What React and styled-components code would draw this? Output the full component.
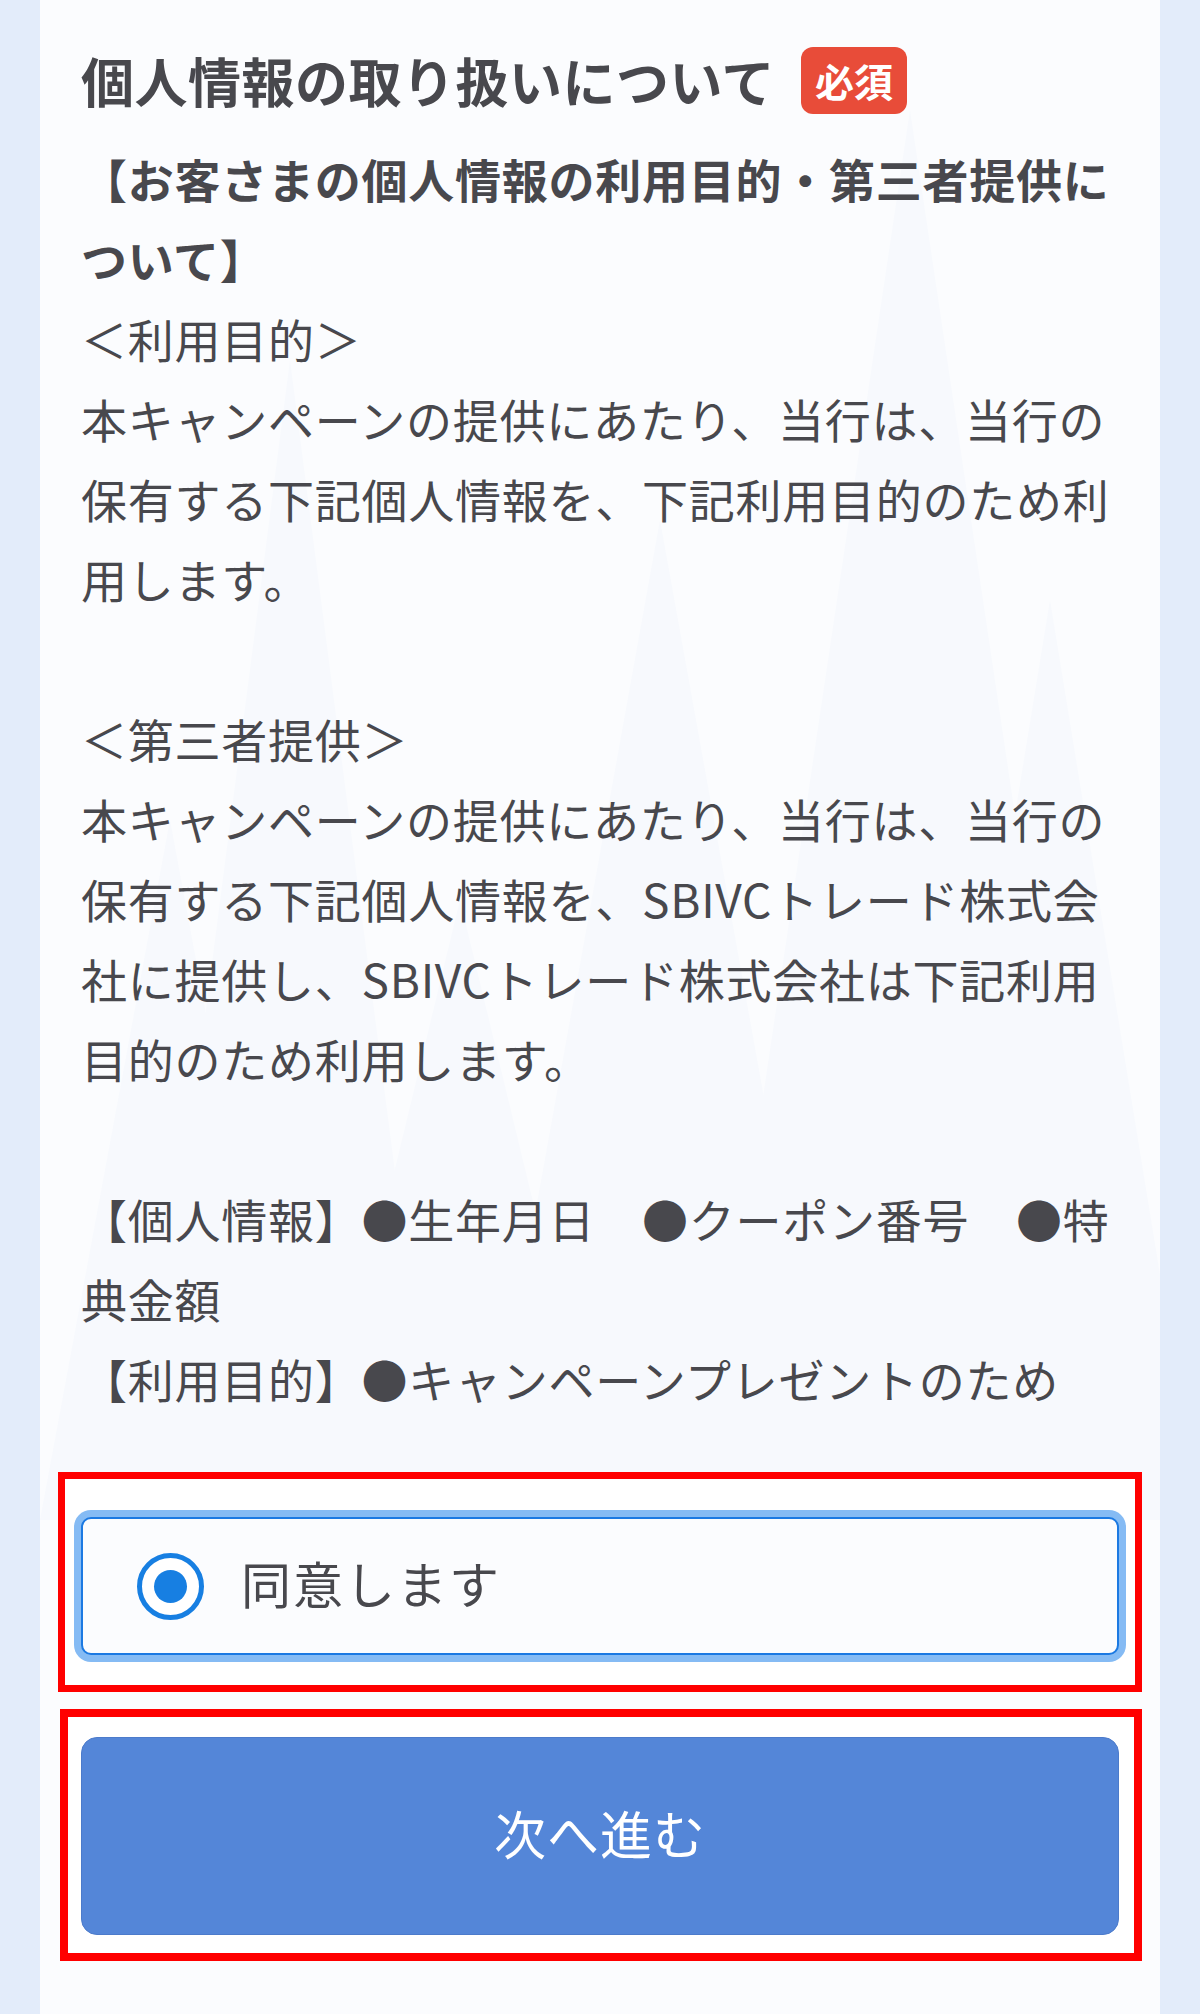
import styled, { createGlobalStyle } from "styled-components";

const GlobalStyle = createGlobalStyle`
  html, body {
    margin: 0;
    padding: 0;
    background: #e3ecfa;
  }
  body {
    font-family: "Noto Sans CJK JP", "Noto Sans", sans-serif;
    color: #48484d;
  }
`;

const peaks = [
  { x: 250, y: 360, w: 300 },
  { x: 870, y: 110, w: 420 },
  { x: 620, y: 520, w: 360 },
  { x: 1010, y: 600, w: 300 },
  { x: 130, y: 820, w: 260 },
  { x: 420, y: 900, w: 300 },
];

function App() {
  return (
    <Page>
      <GlobalStyle />
      <Card>
        <Pattern width="1120" height="1520" viewBox="0 0 1120 1520" aria-hidden="true">
          {peaks.map(({ x, y, w }) => (
            <polygon
              key={x + "-" + y}
              points={`${x},${y} ${x + w / 2},1520 ${x - w / 2},1520`}
              fill="#f7f9fd"
            />
          ))}
        </Pattern>
        <Content>
          <TitleRow>
            <Title>個人情報の取り扱いについて</Title>
            <Badge>必須</Badge>
          </TitleRow>
          <Terms>
            <Lead>【お客さまの個人情報の利用目的・第三者提供について】</Lead>
            <Para>
              ＜利用目的＞
              <br />
              本キャンペーンの提供にあたり、当行は、当行の保有する下記個人情報を、下記利用目的のため利用します。
            </Para>
            <Para>
              ＜第三者提供＞
              <br />
              本キャンペーンの提供にあたり、当行は、当行の保有する下記個人情報を、SBIVCトレード株式会社に提供し、SBIVCトレード株式会社は下記利用目的のため利用します。
            </Para>
            <Para $last>
              【個人情報】●生年月日　●クーポン番号　●特典金額
              <br />
              【利用目的】●キャンペーンプレゼントのため
            </Para>
          </Terms>

          <AgreeFrame>
            <RadioBox>
              <RadioMark />
              <RadioLabel>同意します</RadioLabel>
            </RadioBox>
          </AgreeFrame>

          <NextFrame>
            <NextButton type="button">次へ進む</NextButton>
          </NextFrame>
        </Content>
      </Card>
    </Page>
  );
}

export default App;

const Page = styled.div`
  width: 1200px;
  min-height: 2014px;
  background: #e3ecfa;
`;

const Card = styled.main`
  position: relative;
  width: 1120px;
  min-height: 2014px;
  margin: 0 40px;
  box-sizing: border-box;
  padding: 40px 41px 60px;
  background: #fbfcfe;
  overflow: hidden;
`;

const Pattern = styled.svg`
  position: absolute;
  left: 0;
  top: 0;
  pointer-events: none;
`;

const Content = styled.div`
  position: relative;
`;

const TitleRow = styled.div`
  display: flex;
  align-items: center;
  height: 80px;
  margin-bottom: 18px;
`;

const Title = styled.h2`
  margin: 0;
  font-size: 53px;
  font-weight: 700;
  letter-spacing: 0.5px;
  line-height: 80px;
  color: #48484d;
`;

const Badge = styled.span`
  display: inline-flex;
  align-items: center;
  justify-content: center;
  height: 67px;
  margin-left: 26px;
  padding: 0 14px;
  border-radius: 12px;
  background: #e84c39;
  color: #fff;
  font-size: 39px;
  font-weight: 700;
  line-height: 1;
`;

const Terms = styled.div`
  font-size: 46px;
  letter-spacing: 0.75px;
  line-height: 80px;
  color: #48484d;
`;

const Lead = styled.p`
  margin: 0;
  font-weight: 700;
`;

const Para = styled.p`
  margin: 0 0 ${({ $last }) => ($last ? "0" : "80px")};
  font-weight: 400;
`;

const AgreeFrame = styled.div`
  margin: 54px -23px 0;
  padding: 38px 16px 30px;
  border: 7px solid #ff0000;
  background: #ffffff;
`;

const RadioBox = styled.label`
  display: flex;
  align-items: center;
  gap: 37px;
  height: 138px;
  box-sizing: border-box;
  padding-left: 54px;
  border: 2px solid #1b79e2;
  border-radius: 10px;
  background: #fbfcfe;
  box-shadow: 0 0 0 7px #85bbf4;
`;

const RadioMark = styled.span`
  position: relative;
  flex: none;
  width: 67px;
  height: 67px;
  box-sizing: border-box;
  border: 5px solid #177fe2;
  border-radius: 50%;
  background: #fff;

  &::after {
    content: "";
    position: absolute;
    left: 12px;
    top: 12px;
    width: 33px;
    height: 33px;
    border-radius: 50%;
    background: #177fe2;
  }
`;

const RadioLabel = styled.span`
  font-size: 50px;
  letter-spacing: 2px;
  line-height: 1;
  color: #48484d;
  transform: translateY(-4px);
`;

const NextFrame = styled.div`
  margin: 17px -23px 0 -21px;
  padding: 20px 15px 18px 13px;
  border: 8px solid #ff0000;
  background: #ffffff;
`;

const NextButton = styled.button`
  display: flex;
  align-items: center;
  justify-content: center;
  width: 100%;
  height: 198px;
  padding: 0 0 8px;
  border: 1px solid #4c7bcb;
  border-radius: 16px;
  background: #5486d8;
  color: #fff;
  font-family: "Noto Sans CJK JP", "Noto Sans", sans-serif;
  font-size: 52px;
  font-weight: 400;
  letter-spacing: 1px;
  cursor: pointer;
`;
